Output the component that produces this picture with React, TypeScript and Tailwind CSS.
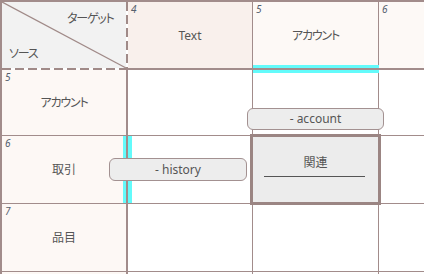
import React from "react";

const line = "border-[#a28c8b]";

const Num: React.FC<{ n: number }> = ({ n }) => (
  <span className="absolute left-[3px] top-[2px] text-[10px] leading-none italic text-[#56606e]">
    {n}
  </span>
);

const Label: React.FC<{ children: React.ReactNode; kana?: boolean }> = ({ children, kana }) => (
  <span
    className={`text-[12px] leading-[16px] text-[#555] [font-feature-settings:'palt'] ${
      kana ? "tracking-[-1.2px]" : ""
    }`}
  >
    {children}
  </span>
);

const rows = [
  { n: 5, label: "アカウント", kana: true, h: "h-[66px]" },
  { n: 6, label: "取引", kana: false, h: "h-[68px]" },
  { n: 7, label: "品目", kana: false, h: "h-[68px]" },
  { n: 8, label: "", kana: false, h: "h-[68px]" },
];

const App: React.FC = () => {
  return (
    <div
      className={`relative w-[424px] h-[274px] overflow-hidden bg-white border-t-2 border-l-2 ${line}`}
      style={{ fontFamily: '"Noto Sans", "Noto Sans CJK JP", sans-serif' }}
    >
      {/* header row */}
      <div className="flex h-[68px]">
        <div className="relative w-[126px] h-[68px] shrink-0">
          <svg width="126" height="68" className="absolute inset-0">
            <rect x="0" y="0" width="124" height="66" fill="#f2f2f2" />
            <line x1="0" y1="0" x2="124" y2="66" stroke="#a08a88" strokeWidth="1.3" />
            <line x1="125" y1="0" x2="125" y2="68" stroke="#a08a88" strokeWidth="2" strokeDasharray="9 4" />
            <line x1="0" y1="67" x2="126" y2="67" stroke="#a08a88" strokeWidth="2" strokeDasharray="9 4" />
          </svg>
          <div className="absolute left-[65px] top-[9px] flex leading-[16px]">
            <Label kana>ターゲット</Label>
          </div>
          <div className="absolute left-[7px] top-[44px] flex leading-[16px]">
            <Label kana>ソース</Label>
          </div>
        </div>
        <div className={`relative w-[125px] shrink-0 bg-[#f9f0ec] border-r border-b-2 ${line} flex items-center justify-center pt-[2px]`}>
          <Num n={4} />
          <Label>Text</Label>
        </div>
        <div className={`relative w-[126px] shrink-0 bg-[#fdf9f6] border-r border-b-2 ${line} flex items-center justify-center pt-[2px]`}>
          <Num n={5} />
          <Label kana>アカウント</Label>
        </div>
        <div className={`relative flex-1 bg-[#fdf9f6] border-b-2 ${line}`}>
          <Num n={6} />
        </div>
      </div>

      {/* body rows */}
      {rows.map((r) => (
        <div key={r.n} className={`flex ${r.h} border-b ${line}`}>
          <div className={`relative w-[126px] shrink-0 bg-[#fdf8f5] border-r-2 ${line} flex items-center justify-center`}>
            {r.label && <Num n={r.n} />}
            {r.label && <Label kana={r.kana}>{r.label}</Label>}
          </div>
          <div className={`w-[125px] shrink-0 border-r ${line}`} />
          {r.n === 6 ? (
            <div className={`w-[126px] shrink-0 border-r ${line} bg-[#ececec] flex flex-col items-center justify-center pb-[8px]`}>
              <Label>関連</Label>
              <div className="mt-[5px] w-[101px] h-px bg-[#555] -translate-x-[1px]" />
            </div>
          ) : (
            <div className={`w-[126px] shrink-0 border-r ${line}`} />
          )}
          <div className="flex-1" />
        </div>
      ))}

      {/* drop highlights */}
      <div className="absolute left-[251px] top-[63px] w-[126px] h-[8px] border-y-[3px] border-[#63fbfb]" />
      <div className="absolute left-[121px] top-[134px] w-[9px] h-[67px] border-l-[3px] border-r-[4px] border-[#63fbfb]" />

      {/* selected cell */}
      <div className="absolute left-[248px] top-[132px] w-[131px] h-[71px] border-[3px] border-[#9b8583]" />

      {/* relation pills */}
      <div className="absolute left-[245px] top-[106px] w-[137px] h-[22px] rounded-[6px] border border-[#a39191] bg-[#ededed] flex items-center justify-center">
        <Label>- account</Label>
      </div>
      <div className="absolute left-[107px] top-[156px] w-[138px] h-[23px] rounded-[6px] border border-[#a39191] bg-[#ededed] flex items-center justify-center">
        <Label>- history</Label>
      </div>
    </div>
  );
};

export default App;
